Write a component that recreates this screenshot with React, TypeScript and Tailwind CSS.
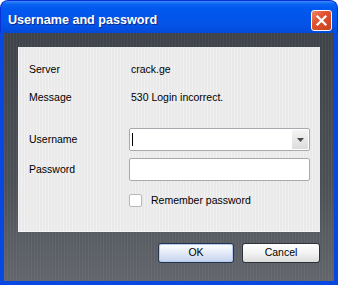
import React from "react";

export default function App() {
  const font = "font-['Liberation_Sans',Arial,sans-serif]";
  return (
    <div className="w-[342px] h-[291px] bg-white">
      <div className="w-[338px] h-[285px] flex flex-col">
        {/* Title bar */}
        <div className="h-[33px] shrink-0 rounded-t-[8px] bg-[linear-gradient(to_bottom,#3b8cff_0px,#0a64f2_3px,#0058ee_8px,#0553e6_24px,#0148da_33px)] border border-[#0831d9] border-b-0 flex items-center pt-[7px] pl-[7px] pr-[5px]">
          <span className={`${font} flex-1 text-white font-bold text-[12.6px] leading-none [text-shadow:1px_1px_0_#0b2a8a]`}>
            Username and password
          </span>
          <div className="w-[21px] h-[21px] rounded-[3px] border border-white bg-[linear-gradient(135deg,#f08a6a_0%,#e0512f_40%,#c8401e_100%)] flex items-center justify-center">
            <svg width="13" height="13" viewBox="0 0 13 13">
              <path d="M2.5 2.5 L10.5 10.5 M10.5 2.5 L2.5 10.5" stroke="white" strokeWidth="2.2" strokeLinecap="square" />
            </svg>
          </div>
        </div>
        {/* Body */}
        <div className="flex-1 flex flex-col border-x-4 border-b-4 border-[#0748e0] bg-[repeating-linear-gradient(90deg,rgba(255,255,255,0.05)_0px,rgba(255,255,255,0.05)_1px,rgba(0,0,0,0)_1px,rgba(0,0,0,0)_3px),linear-gradient(to_bottom,#3e4249,#4b5057_60%,#62666c)] px-[14px] pt-[14px]">
          {/* Panel */}
          <div className={`${font} h-[185px] shrink-0 bg-[repeating-linear-gradient(90deg,#f1f1f1_0px,#f1f1f1_1px,#e9e9ea_1px,#e9e9ea_3px)] border-b border-[#f6f6f6] pl-[11px] pr-[10px] pt-[15px] text-[10.5px] text-black flex flex-col`}>
            <div className="grid grid-cols-[100px_1fr] h-[16px] items-center">
              <span>Server</span>
              <span className="pl-[2px]">crack.ge</span>
            </div>
            <div className="grid grid-cols-[100px_1fr] h-[16px] items-center mt-[12px]">
              <span>Message</span>
              <span className="pl-[2px]">530 Login incorrect.</span>
            </div>
            <div className="grid grid-cols-[100px_1fr] h-[23px] items-center mt-[22px]">
              <span>Username</span>
              <div className="h-[23px] bg-white border border-[#a7abb0] rounded-[2px] flex items-center">
                <div className="flex-1 pl-[2px] flex items-center">
                  <div className="w-px h-[13px] bg-black" />
                </div>
                <div className="w-[16px] h-[19px] mr-px rounded-[1px] bg-[linear-gradient(to_bottom,#f4f4f4,#dcdcdc)] flex items-center justify-center">
                  <svg width="7" height="4" viewBox="0 0 7 4">
                    <path d="M0 0 H7 L3.5 4 Z" fill="#4a4a4a" />
                  </svg>
                </div>
              </div>
            </div>
            <div className="grid grid-cols-[100px_1fr] h-[23px] items-center mt-[7px]">
              <span>Password</span>
              <div className="h-[23px] bg-white border border-[#a7abb0] rounded-[2px]" />
            </div>
            <div className="grid grid-cols-[100px_1fr] h-[13px] items-center mt-[12px]">
              <span />
              <div className="flex items-center">
                <div className="w-[13px] h-[13px] bg-white border border-[#b5b8bc] rounded-[2px]" />
                <span className="ml-[9px]">Remember password</span>
              </div>
            </div>
          </div>
          {/* Buttons */}
          <div className={`${font} flex justify-end gap-[8px] mt-[11px] text-[10.5px] text-black`}>
            <div className="w-[76px] h-[20px] rounded-[3px] border border-[#26344a] bg-[linear-gradient(to_bottom,#ffffff,#e8eef9_40%,#c6d3ec)] shadow-[inset_0_0_0_1px_#b4cbf4] flex items-center justify-center">
              OK
            </div>
            <div className="w-[78px] h-[20px] rounded-[3px] border border-[#2e3238] bg-[linear-gradient(to_bottom,#ffffff,#f3f3f3_50%,#dcdcdc)] flex items-center justify-center">
              Cancel
            </div>
          </div>
        </div>
      </div>
    </div>
  );
}
